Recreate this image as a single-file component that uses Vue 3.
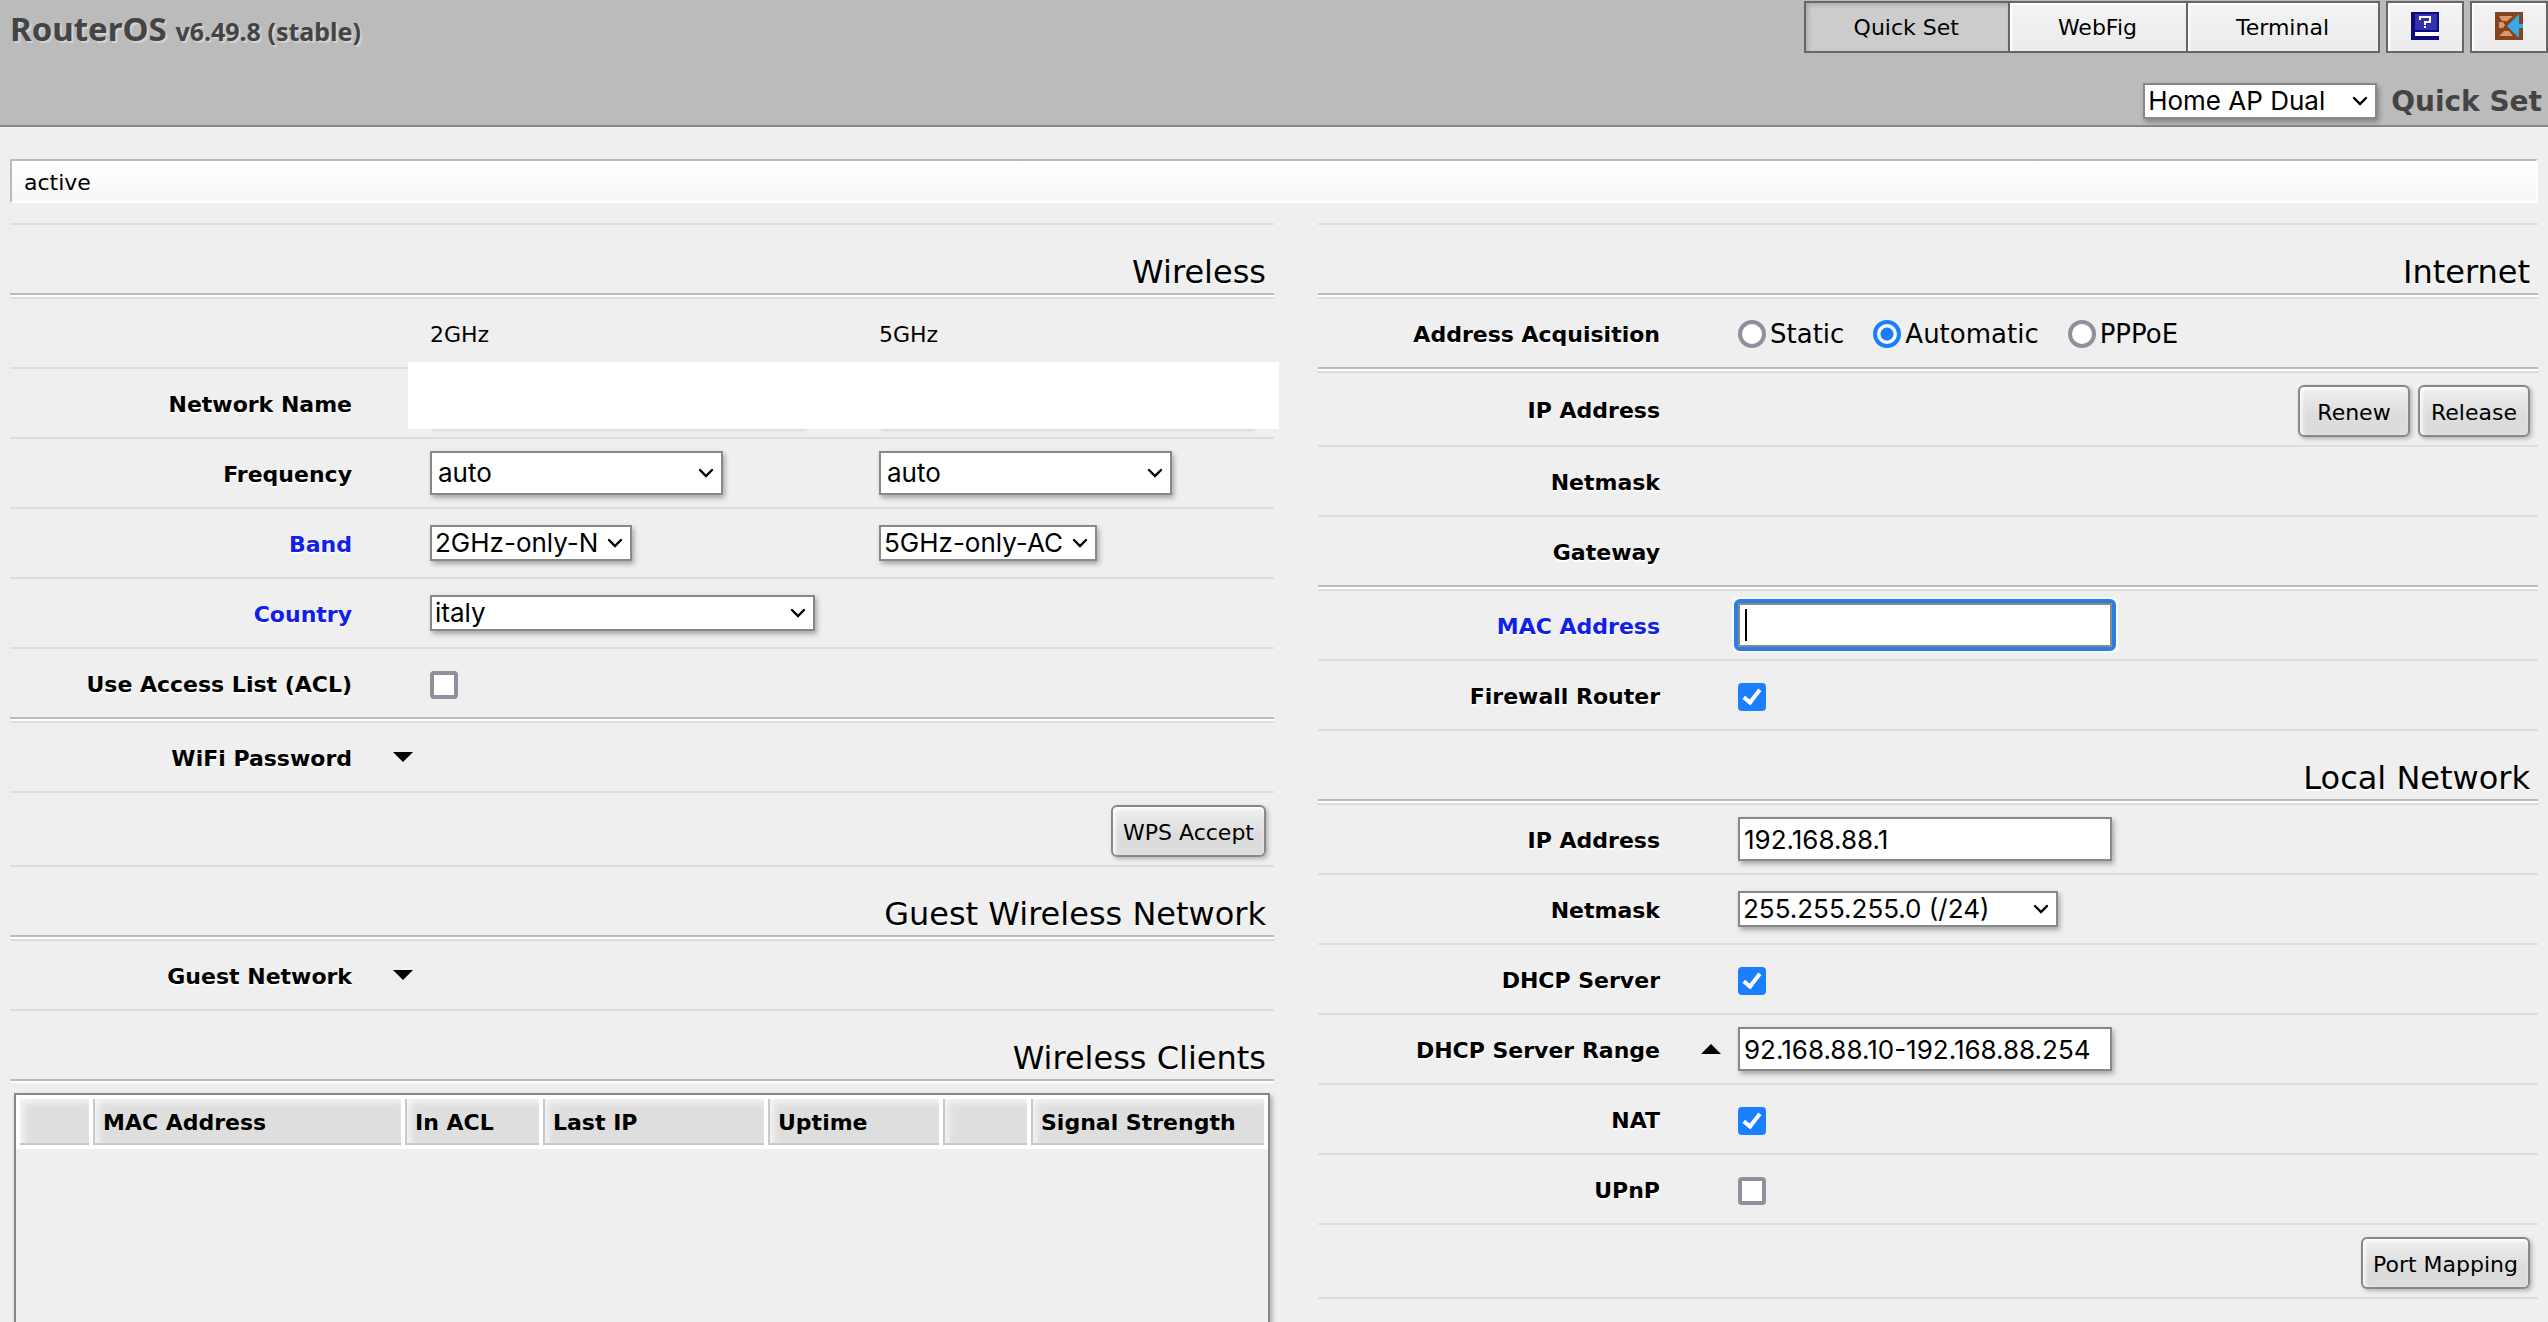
<template>
  <div class="page">
    <header class="header">
      <h1 class="header__title">RouterOS <small>v6.49.8 (stable)</small></h1>
      <div class="header__side">
        <nav class="menu">
          <div class="tabs">
            <button
              v-for="tab in tabs"
              :key="tab.id"
              type="button"
              :class="{ active: activeTab === tab.id }"
              @click="activeTab = tab.id"
            >
              {{ tab.label }}
            </button>
          </div>
          <button type="button" class="menu__icon" aria-label="Manual">
            <svg viewBox="0 0 28 28" width="28" height="28">
              <rect width="28" height="28" fill="#0b0b80" />
              <rect x="4" y="2" width="22" height="16" fill="#3430b0" />
              <rect x="4" y="20" width="24" height="4" fill="#fff" />
              <path d="M9 8V5h10v5h-5v3" fill="none" stroke="#fff" stroke-width="2" />
              <rect x="13" y="14" width="2" height="2" fill="#fff" />
            </svg>
          </button>
          <button type="button" class="menu__icon" aria-label="Logout">
            <svg viewBox="0 0 28 28" width="28" height="28">
              <rect width="28" height="28" fill="#84441f" />
              <path d="M4 4h14l-6 5H7zM4 10h4l2 3-2 3H4zM4 24l5-5h5l4 5z" fill="#dc9868" />
              <path d="M12 14L24 2v10h4v4h-4v10z" fill="#36a9e6" />
            </svg>
          </button>
        </nav>
        <div class="mode">
          <select v-model="mode" class="select select--mode" aria-label="Mode">
            <option>Home AP Dual</option>
          </select>
          <h2 class="mode__title">Quick Set</h2>
        </div>
      </div>
    </header>

    <main class="content">
      <div class="status">active</div>

      <div class="columns">
        <section class="column">
          <h3 class="heading">Wireless</h3>

          <div class="row">
            <div class="value bands bands--title">
              <span>2GHz</span>
              <span>5GHz</span>
            </div>
          </div>
          <div class="row">
            <label for="name2">Network Name</label>
            <div class="value bands">
              <input id="name2" type="text" class="input" />
              <input type="text" class="input" aria-label="Network Name 5GHz" />
            </div>
            <div class="cover"></div>
          </div>
          <div class="row">
            <label for="freq2">Frequency</label>
            <div class="value bands">
              <select id="freq2" class="select select--freq">
                <option>auto</option>
              </select>
              <select class="select select--freq" aria-label="Frequency 5GHz">
                <option>auto</option>
              </select>
            </div>
          </div>
          <div class="row">
            <label for="band2" class="link">Band</label>
            <div class="value bands">
              <select id="band2" class="select select--band2">
                <option>2GHz-only-N</option>
              </select>
              <select class="select select--band5" aria-label="Band 5GHz">
                <option>5GHz-only-AC</option>
              </select>
            </div>
          </div>
          <div class="row">
            <label for="country" class="link">Country</label>
            <div class="value">
              <select id="country" class="select select--country">
                <option>italy</option>
              </select>
            </div>
          </div>
          <div class="row">
            <label for="acl">Use Access List (ACL)</label>
            <div class="value"><input id="acl" v-model="acl" type="checkbox" class="check" /></div>
          </div>

          <div class="row row--sep">
            <label for="wifi-password">WiFi Password</label>
            <button id="wifi-password" type="button" class="arrow" aria-label="Show password"></button>
          </div>
          <div class="row row--buttons">
            <div class="buttons">
              <button type="button" class="btn">WPS Accept</button>
            </div>
          </div>

          <h3 class="heading">Guest Wireless Network</h3>
          <div class="row">
            <label for="guest">Guest Network</label>
            <button id="guest" type="button" class="arrow" aria-label="Show guest network"></button>
          </div>

          <h3 class="heading">Wireless Clients</h3>
          <div class="clients">
            <table>
              <colgroup>
                <col v-for="(col, i) in clientColumns" :key="i" :style="{ width: col.width }" />
              </colgroup>
              <thead>
                <tr>
                  <th v-for="(col, i) in clientColumns" :key="i">{{ col.label }}</th>
                </tr>
              </thead>
            </table>
          </div>
        </section>

        <section class="column column--right">
          <h3 class="heading">Internet</h3>

          <div class="row">
            <span class="label">Address Acquisition</span>
            <div class="value radios">
              <label v-for="item in acquisitions" :key="item">
                <input v-model="acquisition" type="radio" name="acquisition" :value="item" />
                {{ item }}
              </label>
            </div>
          </div>

          <div class="row row--sep row--buttons">
            <span class="label">IP Address</span>
            <div class="buttons">
              <button type="button" class="btn">Renew</button>
              <button type="button" class="btn">Release</button>
            </div>
          </div>
          <div class="row">
            <span class="label">Netmask</span>
          </div>
          <div class="row">
            <span class="label">Gateway</span>
          </div>

          <div class="row row--sep">
            <label for="mac" class="link">MAC Address</label>
            <div class="value"><input id="mac" type="text" class="input input--focus" /></div>
          </div>
          <div class="row">
            <label for="firewall">Firewall Router</label>
            <div class="value">
              <input id="firewall" v-model="firewall" type="checkbox" class="check" />
            </div>
          </div>

          <h3 class="heading">Local Network</h3>
          <div class="row">
            <label for="local-ip">IP Address</label>
            <div class="value"><input id="local-ip" v-model="localIp" type="text" class="input" /></div>
          </div>
          <div class="row">
            <label for="netmask">Netmask</label>
            <div class="value">
              <select id="netmask" class="select select--netmask">
                <option>255.255.255.0 (/24)</option>
              </select>
            </div>
          </div>
          <div class="row">
            <label for="dhcp">DHCP Server</label>
            <div class="value"><input id="dhcp" v-model="dhcp" type="checkbox" class="check" /></div>
          </div>
          <div class="row">
            <label for="range">DHCP Server Range</label>
            <button type="button" class="arrow arrow--up" aria-label="Remove range"></button>
            <div class="value"><input id="range" v-model="range" type="text" class="input" /></div>
          </div>
          <div class="row">
            <label for="nat">NAT</label>
            <div class="value"><input id="nat" v-model="nat" type="checkbox" class="check" /></div>
          </div>
          <div class="row">
            <label for="upnp">UPnP</label>
            <div class="value"><input id="upnp" v-model="upnp" type="checkbox" class="check" /></div>
          </div>
          <div class="row row--buttons">
            <div class="buttons">
              <button type="button" class="btn">Port Mapping</button>
            </div>
          </div>
          <div class="row"></div>
        </section>
      </div>
    </main>
  </div>
</template>

<script setup>
import { ref } from 'vue';

const tabs = [
  { id: 'quickset', label: 'Quick Set' },
  { id: 'webfig', label: 'WebFig' },
  { id: 'terminal', label: 'Terminal' }
];
const activeTab = ref('quickset');
const mode = ref('Home AP Dual');

// Wireless
const acl = ref(false);

const clientColumns = [
  { label: '', width: '69px' },
  { label: 'MAC Address', width: '308px' },
  { label: 'In ACL', width: '134px' },
  { label: 'Last IP', width: '221px' },
  { label: 'Uptime', width: '171px' },
  { label: '', width: '84px' },
  { label: 'Signal Strength', width: 'auto' }
];

// Internet
const acquisitions = ['Static', 'Automatic', 'PPPoE'];
const acquisition = ref('Automatic');
const firewall = ref(true);

// Local network
const localIp = ref('192.168.88.1');
const range = ref('92.168.88.10-192.168.88.254');
const dhcp = ref(true);
const nat = ref(true);
const upnp = ref(false);
</script>

<style>
body {
  background: #efefef;
}
</style>

<style scoped>
.page {
  height: 100vh;
  overflow-y: auto;
  scrollbar-width: none;
  color: #000;
  font-family: Verdana, "DejaVu Sans", sans-serif;
  font-size: 22px;
  line-height: 28px;
}

.page *,
.page *::before {
  box-sizing: border-box;
}

button,
input,
select {
  margin: 0;
  color: inherit;
  font: inherit;
}

/* Header */
.header {
  display: flex;
  justify-content: space-between;
  border-bottom: 2px solid #888;
  background: #bbb;
}

.header__title {
  margin: 0;
  padding: 7px 10px;
  color: #444;
  font-family: "Noto Sans", sans-serif;
  font-size: 33px;
  line-height: 44px;
  text-shadow: 2px 2px 1px #d4d4d4;
}

.header__title small {
  font-size: 25px;
}

.header__side {
  display: flex;
  flex-direction: column;
  align-items: flex-end;
  padding-top: 1px;
}

.menu {
  display: flex;
  gap: 6px;
}

.menu button {
  height: 52px;
  border: 2px solid #666;
  background: linear-gradient(#f3f3f3, #ececec);
  box-shadow: inset 2px 2px 2px #fff;
}

.tabs {
  display: flex;
}

.tabs button {
  padding: 2px 49px 0 48px;
}

.tabs button + button {
  border-left: 0;
}

.tabs button.active {
  background: #ccc;
  box-shadow: inset 2px 2px 4px #aaa;
}

.menu .menu__icon {
  display: flex;
  align-items: center;
  justify-content: center;
  width: 78px;
  padding: 0 0 2px;
}

.mode {
  display: flex;
  align-items: center;
  gap: 14px;
  height: 72px;
  padding: 24px 6px 0 0;
}

.mode__title {
  margin: 0;
  padding-top: 2px;
  color: #444;
  font-size: 28px;
  line-height: 36px;
}

/* Layout */
.content {
  padding: 32px 10px 0;
}

.status {
  height: 44px;
  margin-bottom: 20px;
  padding: 8px 12px 0;
  border: 2px solid #fff;
  border-top-color: #bbb;
  border-left-color: #bbb;
  background: linear-gradient(#fff, #f7f7f7);
}

.columns {
  display: grid;
  grid-template-columns: 1fr 1fr;
}

.column {
  min-width: 0;
}

.column--right {
  padding-left: 44px;
}

.heading {
  height: 74px;
  margin: 0;
  padding: 26px 8px 0;
  border-top: 2px solid #ddd;
  border-bottom: 2px solid #fff;
  box-shadow: inset 0 -2px #bbb;
  font-size: 32px;
  font-weight: normal;
  line-height: 42px;
  text-align: right;
  text-shadow: 0 2px #fff;
}

.row {
  display: grid;
  grid-template-columns: 342px 78px 1fr;
  align-items: center;
  position: relative;
  min-height: 70px;
  border-top: 2px solid #ddd;
}

.row > label,
.label {
  grid-column: 1;
  padding-top: 4px;
  font-weight: bold;
  text-align: right;
  text-shadow: 0 2px #fff;
}

.row > .link {
  color: #1020e8;
}

.row--sep {
  margin-top: 4px;
}

.row--sep::before {
  content: "";
  position: absolute;
  top: -6px;
  left: 0;
  right: 0;
  height: 4px;
  border-top: 2px solid #bbb;
  border-bottom: 2px solid #fff;
}

.row--buttons {
  min-height: 74px;
}

.value {
  display: flex;
  grid-column: 3;
  align-items: center;
}

.bands {
  display: grid;
  grid-template-columns: 449px 1fr;
}

.bands--title {
  padding-top: 4px;
}

/* Blank area over both name boxes */
.cover {
  position: absolute;
  top: -7px;
  left: 398px;
  right: -5px;
  height: 67px;
  background: #fff;
}

/* Controls */
.select,
.input {
  border: 2px solid #888;
  border-radius: 0;
  background-color: #fff;
  box-shadow: 2px 3px 5px rgba(0, 0, 0, 0.3);
  font-family: Inter, sans-serif;
  font-size: 26px;
}

.input {
  width: 374px;
  height: 44px;
  padding: 0 4px;
}

.input--focus {
  outline: 4px solid #2a7de1;
  outline-offset: 0;
  border-radius: 2px;
  background: linear-gradient(#000, #000) 5px 50% / 2px 32px no-repeat #fff;
  box-shadow: 0 0 0 6px #fafafa;
}

.select {
  height: 36px;
  padding: 0 3px;
  appearance: none;
  background-image: url("data:image/svg+xml,%3Csvg xmlns='http://www.w3.org/2000/svg' width='16' height='10'%3E%3Cpath d='M2 2l6 6 6-6' fill='none' stroke='%23000' stroke-width='2.4' stroke-linecap='round'/%3E%3C/svg%3E");
  background-repeat: no-repeat;
  background-position: right 7px center;
}

.select--mode {
  width: 234px;
}

.select--freq {
  width: 293px;
  height: 44px;
  padding: 0 6px;
}

.select--band2 {
  width: 202px;
}

.select--band5 {
  width: 218px;
}

.select--country {
  width: 385px;
}

.select--netmask {
  width: 320px;
}

.check {
  display: grid;
  place-items: center;
  width: 28px;
  height: 28px;
  margin-top: 4px;
  appearance: none;
  border: 4px solid #8f8f9d;
  border-radius: 4px;
  background: #fff;
}

.check:checked {
  border-color: #1a7fff;
  background: #1a7fff;
}

.check:checked::before {
  content: "";
  width: 10px;
  height: 18px;
  margin-top: -4px;
  border: solid #fff;
  border-width: 0 4px 4px 0;
  transform: rotate(38deg);
}

.radios {
  gap: 29px;
  padding-top: 2px;
  font-size: 26px;
}

.radios label {
  display: flex;
  align-items: center;
  gap: 4px;
}

.radios input {
  width: 28px;
  height: 28px;
  appearance: none;
  border: 4px solid #8f8f9d;
  border-radius: 50%;
  background: #fff;
}

.radios input:checked {
  border-color: #1a7fff;
  background: radial-gradient(circle, #1a7fff 6px, #fff 7px);
}

.arrow {
  grid-column: 2;
  justify-self: center;
  width: 20px;
  height: 10px;
  margin-left: 24px;
  padding: 0;
  border: 0;
  background: #000;
  clip-path: polygon(0 0, 100% 0, 50% 100%);
}

.arrow--up {
  clip-path: polygon(50% 0, 100% 100%, 0 100%);
}

.buttons {
  display: flex;
  grid-column: 3;
  justify-content: flex-end;
  gap: 8px;
  padding: 12px 8px 8px 0;
}

.btn {
  min-width: 112px;
  height: 52px;
  padding: 3px 10px 0;
  border: 2px solid #888;
  border-radius: 6px;
  background: linear-gradient(#efefef, #dcdcdc 60%);
  box-shadow: inset 2px 2px 4px #fff, 2px 2px 4px rgba(0, 0, 0, 0.25);
}

/* Clients table */
.clients {
  min-height: 420px;
  margin: 10px 4px 0;
  border: 2px solid #888;
  box-shadow: 2px 3px 5px rgba(0, 0, 0, 0.3);
}

.clients table {
  width: 100%;
  border-spacing: 4px;
  background: #fff;
  table-layout: fixed;
}

.clients th {
  height: 46px;
  padding: 4px 8px 0;
  border-bottom: 2px solid #c8c8c8;
  border-left: 2px solid #c8c8c8;
  background: #dedede;
  box-shadow: inset 4px 4px 6px #f4f4f4;
  text-align: left;
  white-space: nowrap;
}

.clients th:first-child {
  border-left: 0;
}
</style>
